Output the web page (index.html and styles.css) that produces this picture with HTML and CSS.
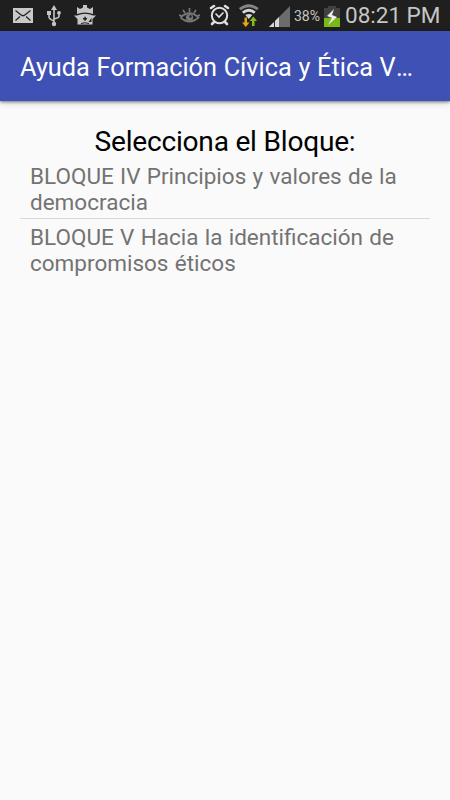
FILE: index.html
```
<!DOCTYPE html>
<html lang="es">
<head>
<meta charset="utf-8">
<title>Ayuda Formación Cívica y Ética V</title>
<link rel="stylesheet" href="styles.css">
</head>
<body>
<div class="status">
  <svg class="mail" width="20" height="15" viewBox="0 0 20 15"><path fill="#c9c9c9" d="M0 0h20v15H0z"/><path fill="none" stroke="#222" stroke-width="1.2" d="M2.5 2.5 7.5 6.5Q10 9 12.500 6.500L17.500 2.500M2.500 12.500 7 8.500M17.500 12.500 13 8.500"/></svg>
  <svg class="usb" width="14" height="22" viewBox="0 0 14 22"><path fill="none" stroke="#c5c5c5" stroke-width="1.600" d="M7 3v16M2 8v4q0 2 5 4M12 8v3q0 2-5 3"/><path fill="#c5c5c5" d="M7 0 10 5H4zM0 6h4v4H0z"/><circle cx="12" cy="7.800" r="1.900" fill="#c5c5c5"/><circle cx="7" cy="19" r="2.200" fill="#c5c5c5"/></svg>
  <svg class="face" width="22" height="20" viewBox="0 0 22 20"><path fill="#c5c5c5" d="M3 2 6 4 9 2.500V0h4v2.500L16 4l3-2v7q-8-3-16 0zM0 10.500h3q8-3.500 16 0h3L18.500 14v5.500h-15V14z"/><path fill="#222" d="M9 13h4v1.500H9zM10.300 11.800h1.500v4h-1.500zM17.500 13v4h-3z"/><path stroke="#222" fill="none" stroke-width="1" d="M7 18.500q4-1.500 8 0"/></svg>
  <span class="space"></span>
  <svg class="eye" width="21" height="18" viewBox="0 0 21 18"><path fill="none" stroke="#777" stroke-width="1.700" d="M1.500 10.500q9-8.500 18 0-9 8-18 0M10.500 1v4M4 3l2 3M17 3l-2 3M0 8l3 1M21 8l-3 1"/><circle cx="10.500" cy="10.500" r="3.600" fill="#777"/><circle cx="11.500" cy="9.500" r="1.200" fill="#222"/></svg>
  <svg class="alarm" width="21" height="22" viewBox="0 0 21 22"><g fill="none" stroke="#dedede" stroke-linecap="round"><circle cx="10.500" cy="11.500" r="7.700" stroke-width="2"/><path stroke-width="2.600" d="M2 4 5 2M19 4l-3-2M5 18l-2 2M16 18l2 2"/><path stroke-width="1.700" d="m7 10 3 3 4-4"/></g></svg>
  <svg class="wifi" width="22" height="23" viewBox="0 0 22 23"><g fill="none" stroke-width="2.800"><path stroke="#858585" d="M.8 5.200q9-7 18 0"/><path stroke="#d5d5d5" d="M3.800 8.600q6-4.600 12 0"/></g><path fill="#d5d5d5" d="M6.300 11q3.500-2 7 0l-3.500 4z"/><path fill="#e0a817" d="M5.500 13.500h2.500v5h2.500l-3.700 4.500L3 18.500h2.500z"/><path fill="#83bd15" d="M13 22h2.500v-5H18l-3.700-4.500-3.700 4.500H13z"/></svg>
  <svg class="signal" width="21" height="21" viewBox="0 0 21 21"><path fill="#6c6c6c" d="M21 0v21H0z"/><path fill="#d8d8d8" d="M10 11v10H0z"/><path stroke="#262626" d="M5.500 14v7"/></svg>
  <span class="percent">38%</span>
  <svg class="battery" width="16" height="21" viewBox="0 0 16 21"><path fill="#414141" d="M4 0h8v2h4v19H0V2h4z"/><path fill="#78b917" d="M0 12h16v9H0z"/><path fill="#eee" d="M10 3 3 10l5 2-4 7 9-8-5-2z"/></svg>
  <span class="clock">08:21 PM</span>
</div>
<header class="bar"><h1>Ayuda Formación Cívica y Ética V<span class="dots">…</span></h1></header>
<main>
  <h2>Selecciona el Bloque:</h2>
  <ul>
    <li>BLOQUE IV Principios y valores de la democracia</li>
    <li>BLOQUE V Hacia la identificación de compromisos éticos</li>
  </ul>
</main>
</body>
</html>
```
FILE: styles.css
```
* { box-sizing: border-box; }
body {
  margin: 0;
  min-height: 800px;
  background: #fafafa;
  font-family: Roboto, "Liberation Sans", sans-serif;
}
.status {
  display: flex;
  align-items: flex-start;
  height: 31px;
  background: #1f1f1f;
  color: #c6c6c6;
  white-space: nowrap;
}
.status svg { flex: none; }
.mail { margin: 8px 0 0 13px; }
.usb { margin: 5px 0 0 14px; }
.face { margin: 5px 0 0 13px; }
.space { flex: 1; }
.eye { margin-top: 7px; }
.alarm { margin: 4px 0 0 9px; }
.wifi { margin: 4px 0 0 9px; }
.signal { margin: 6px 0 0 8px; }
.percent { width: 27px; margin: 8px 0 0 4px; font-size: 14px; line-height: 17px; }
.battery { margin: 6px 0 0 3px; }
.clock { width: 95px; margin: 2px 10px 0 5px; font-size: 22.500px; line-height: 27px; }
.bar {
  display: flex;
  align-items: center;
  height: 70px;
  padding: 3px 20px 0;
  background: #3f51b5;
  color: #fff;
  box-shadow: 0 1px 3px rgba(0, 0, 0, .5), 0 3px 7px rgba(0, 0, 0, .1);
}
h1 { margin: 0; font-size: 25.300px; font-weight: 400; line-height: 30px; white-space: nowrap; word-spacing: .4px; }
.dots { margin-left: .3px; }
main { padding: 24px 20px 0; }
h2 { margin: 0; color: #000; font-size: 28.100px; font-weight: 400; line-height: 33px; text-align: center; letter-spacing: -.22px; }
ul { margin: 4px 0 0; padding: 0; list-style: none; }
li { padding: 1px 10px 2px; color: #737373; font-size: 22.500px; line-height: 26.400px; word-spacing: .7px; }
li + li { padding-top: 5px; border-top: 1px solid #d9d9d9; }
```
